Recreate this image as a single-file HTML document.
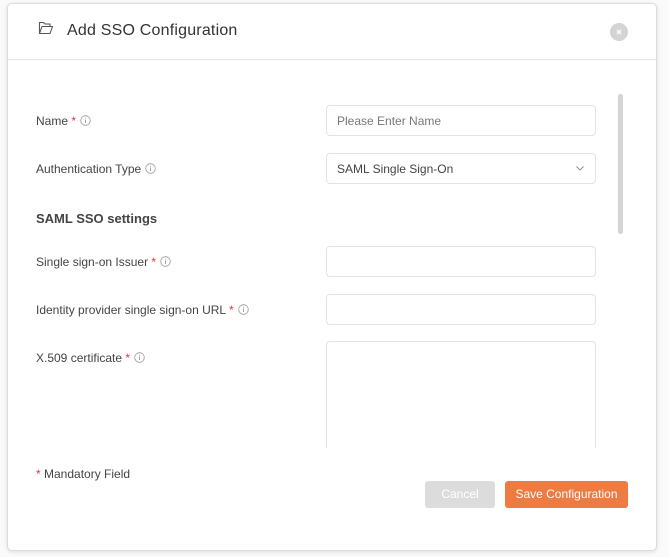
<!DOCTYPE html>
<html><head><meta charset="utf-8"><style>
*{box-sizing:border-box;margin:0;padding:0}
body{width:669px;height:557px;background:#fafafa;font-family:"Liberation Sans",sans-serif;position:relative;overflow:hidden}
.modal{position:absolute;left:7px;top:3px;width:650px;height:548px;background:#fff;border:1px solid #dcdcdc;border-radius:5px;box-shadow:0 1px 4px rgba(0,0,0,.12)}
.hdr{position:absolute;left:0;top:0;width:100%;height:56px;border-bottom:1px solid #e6e6e6}
.title{position:absolute;left:59px;top:18px;font-size:16px;color:#333;letter-spacing:.2px}
.close{position:absolute;left:602px;top:19px;width:18px;height:18px;border-radius:50%;background:#d4d4d4}
.lbl{position:absolute;left:28px;font-size:12px;color:#444}
.req{color:#e33}
.inp{position:absolute;left:318px;width:270px;height:31px;border:1px solid #e3e3e3;border-radius:4px;font-size:12px;color:#444;padding:8px 10px}
.info{display:inline-block;vertical-align:middle;margin-left:4px;margin-top:-2px}
.sec{position:absolute;left:28px;top:207px;font-size:13px;font-weight:bold;color:#444}
.sb{position:absolute;left:610px;top:90px;width:5px;height:140px;background:#d4d4d4;border-radius:3px}
.btn{position:absolute;top:477px;height:27px;border-radius:3px;font-size:12px;color:#fff;text-align:center;line-height:27px}
</style></head><body>
<div class="modal">
<div class="hdr">
<svg style="position:absolute;left:30px;top:17px" width="16" height="14" viewBox="0 0 16 14"><path d="M1.5 12.5V1.5h4l1.5 1.5h5v2.5M1.5 12.5l2.5-7h10.5l-2.5 7z" fill="none" stroke="#555" stroke-width="1.1" stroke-linejoin="round"/></svg>
<div class="title">Add SSO Configuration</div>
<div class="close"><svg width="18" height="18" viewBox="0 0 18 18"><path d="M7 7l4 4M11 7l-4 4" stroke="#fff" stroke-width="1.3"/></svg></div>
</div>
<div class="lbl" style="top:110px">Name <span class="req">*</span><svg class="info" width="11" height="11" viewBox="0 0 11 11"><circle cx="5.5" cy="5.5" r="4.8" fill="none" stroke="#999" stroke-width=".8"/><path d="M5.5 4.5v3.5M5.5 2.8v.8" stroke="#999" stroke-width=".9"/></svg></div>
<div class="inp" style="top:101px;color:#777">Please Enter Name</div>
<div class="lbl" style="top:158px">Authentication Type<svg class="info" width="11" height="11" viewBox="0 0 11 11"><circle cx="5.5" cy="5.5" r="4.8" fill="none" stroke="#999" stroke-width=".8"/><path d="M5.5 4.5v3.5M5.5 2.8v.8" stroke="#999" stroke-width=".9"/></svg></div>
<div class="inp" style="top:149px">SAML Single Sign-On<svg style="position:absolute;right:11px;top:12px" width="8" height="5" viewBox="0 0 8 5"><path d="M.5.5l3.5 3.5L7.5.5" fill="none" stroke="#888" stroke-width=".9"/></svg></div>
<div class="sec">SAML SSO settings</div>
<div class="lbl" style="top:251px">Single sign-on Issuer <span class="req">*</span><svg class="info" width="11" height="11" viewBox="0 0 11 11"><circle cx="5.5" cy="5.5" r="4.8" fill="none" stroke="#999" stroke-width=".8"/><path d="M5.5 4.5v3.5M5.5 2.8v.8" stroke="#999" stroke-width=".9"/></svg></div>
<div class="inp" style="top:242px"></div>
<div class="lbl" style="top:299px">Identity provider single sign-on URL <span class="req">*</span><svg class="info" width="11" height="11" viewBox="0 0 11 11"><circle cx="5.5" cy="5.5" r="4.8" fill="none" stroke="#999" stroke-width=".8"/><path d="M5.5 4.5v3.5M5.5 2.8v.8" stroke="#999" stroke-width=".9"/></svg></div>
<div class="inp" style="top:290px"></div>
<div class="lbl" style="top:347px">X.509 certificate <span class="req">*</span><svg class="info" width="11" height="11" viewBox="0 0 11 11"><circle cx="5.5" cy="5.5" r="4.8" fill="none" stroke="#999" stroke-width=".8"/><path d="M5.5 4.5v3.5M5.5 2.8v.8" stroke="#999" stroke-width=".9"/></svg></div>
<div class="inp" style="top:337px;height:107px;border-bottom:none;border-radius:4px 4px 0 0"></div>
<div class="sb"></div>
<div class="lbl" style="top:463px"><span class="req">*</span> Mandatory Field</div>
<div class="btn" style="left:417px;width:70px;background:#dcdcdc">Cancel</div>
<div class="btn" style="left:497px;width:123px;background:#ee7b41">Save Configuration</div>
</div>
</body></html>
